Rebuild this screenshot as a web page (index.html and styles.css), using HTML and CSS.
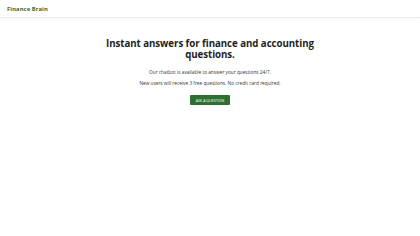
FILE: index.html
```html
<!DOCTYPE html>
<html lang="en">
<head>
<meta charset="utf-8">
<title>Finance Brain</title>
<link rel="stylesheet" href="styles.css">
</head>
<body>
<header class="topbar">
  <a class="logo" href="#">Finance Brain</a>
</header>
<main class="hero">
  <h1 class="title">Instant answers for finance and accounting questions.</h1>
  <p class="text">Our chatbot is available to answer your questions 24/7.</p>
  <p class="text">New users will receive 3 free questions. No credit card required.</p>
  <a class="cta" href="#">ASK A QUESTION</a>
</main>
</body>
</html>
```
FILE: styles.css
```css
* { box-sizing: border-box; }
html, body { margin: 0; padding: 0; background: #fff; }
body { font-family: "Open Sans", "Noto Sans", sans-serif; color: #222; }
.topbar {
  height: 18px;
  display: flex;
  align-items: center;
  padding: 0 7px;
  border-bottom: 1px solid #ececec;
  box-shadow: 0 1px 2px rgba(0,0,0,0.04);
}
.logo {
  font-size: 5.8px;
  font-weight: 700;
  color: #2e6b30;
  text-decoration: none;
  letter-spacing: 0.1px;
}
.hero {
  display: flex;
  flex-direction: column;
  align-items: center;
  padding-top: 19.5px;
}
.title {
  margin: 0 0 8.7px;
  width: 226px;
  text-align: center;
  font-size: 9.7px;
  line-height: 11.5px;
  font-weight: 700;
  color: #1e1e1e;
  letter-spacing: -0.05px;
}
.text {
  margin: 0 0 5px;
  font-size: 4.75px;
  line-height: 6px;
  color: #333;
}
.cta {
  margin-top: 4px;
  display: inline-flex;
  align-items: center;
  justify-content: center;
  width: 40px;
  height: 10px;
  background: #2e7032;
  color: #fff;
  font-size: 3.6px;
  text-decoration: none;
  border-radius: 1px;
}
```
